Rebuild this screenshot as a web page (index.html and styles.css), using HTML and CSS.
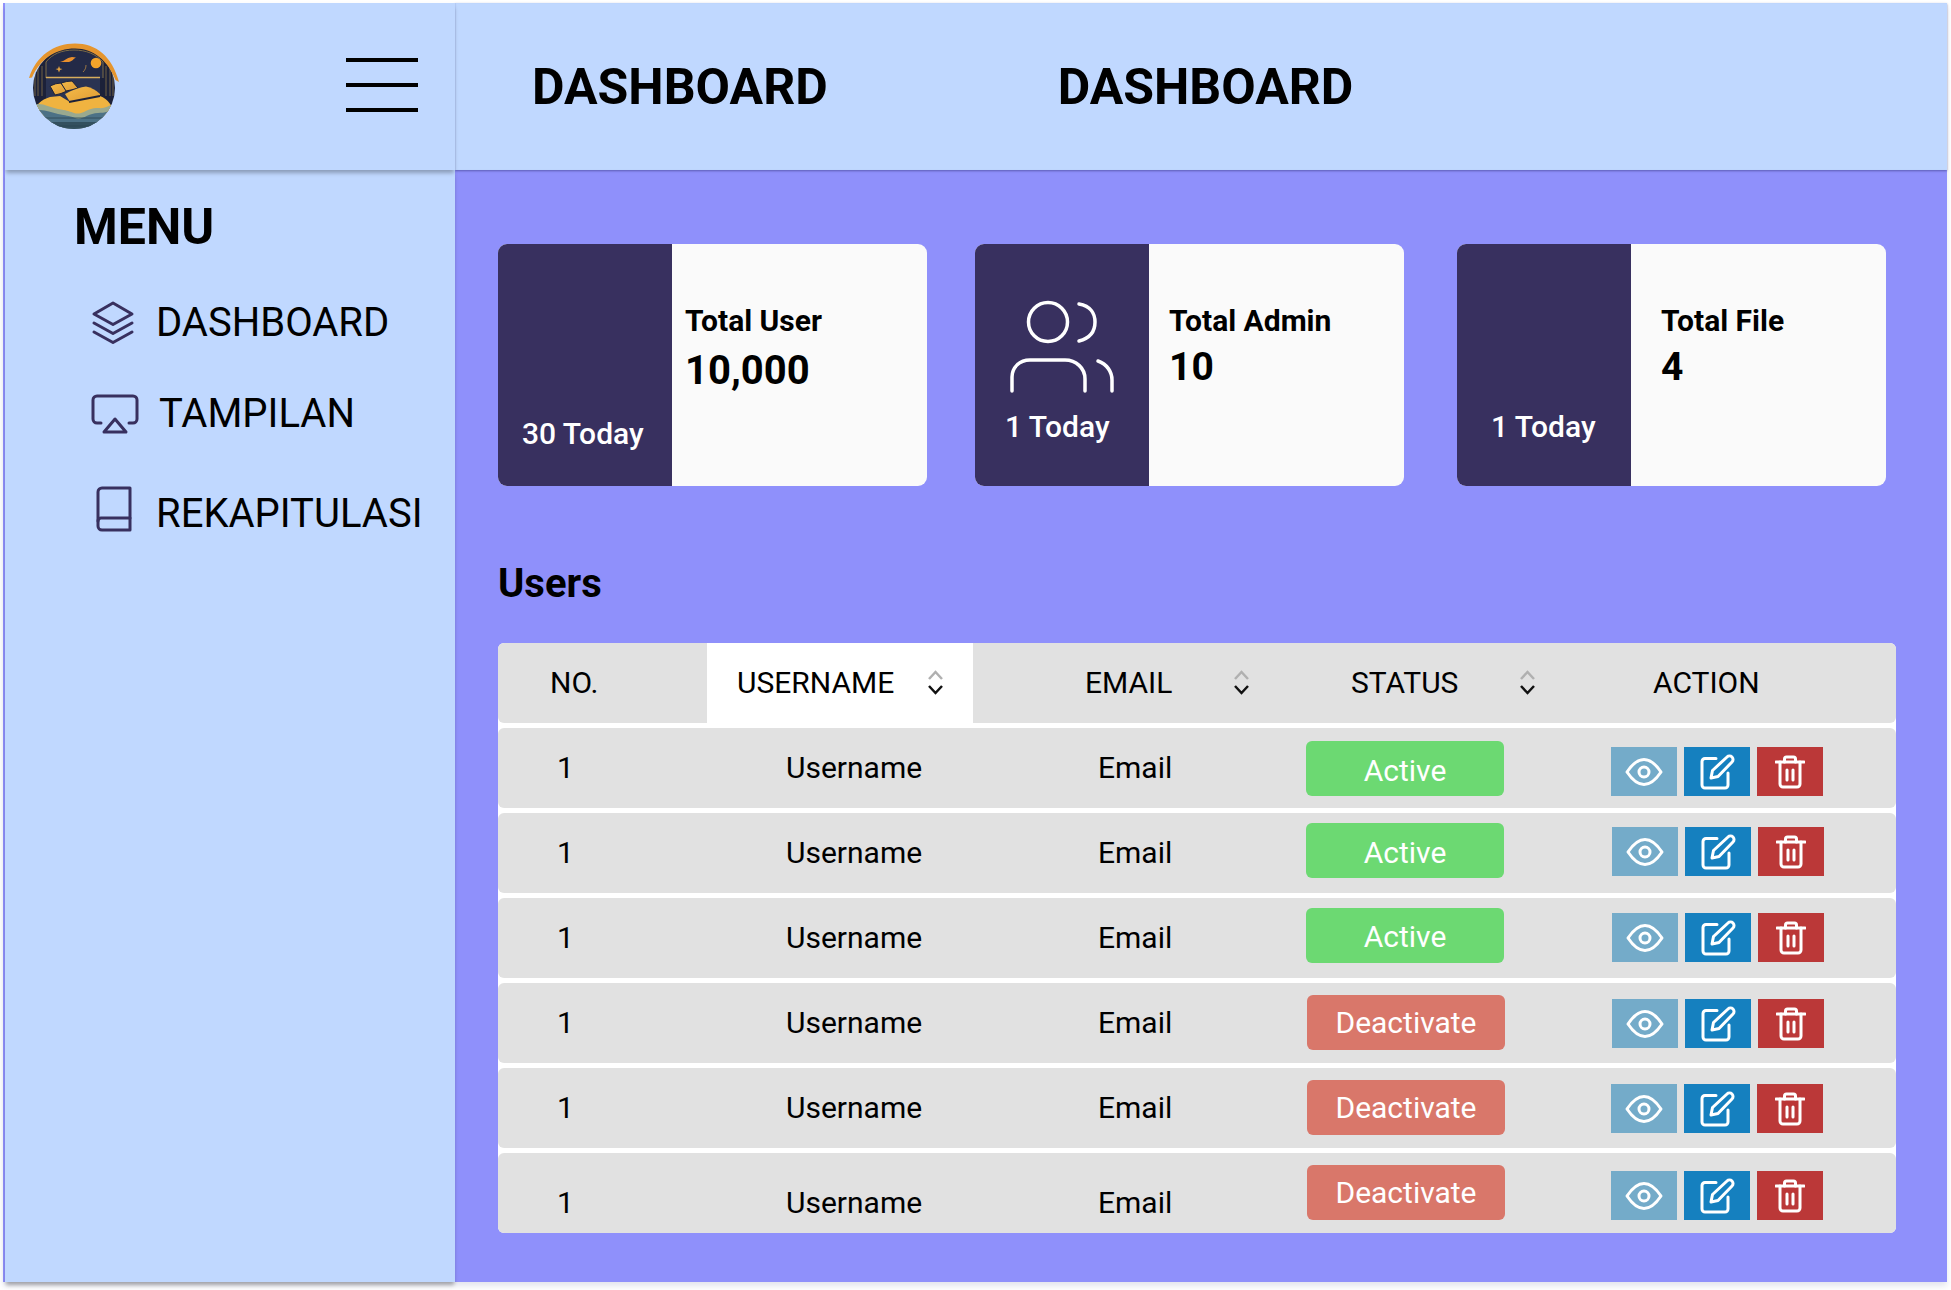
FILE: index.html
```html
<!DOCTYPE html>
<html lang="id">
<head>
<meta charset="utf-8">
<title>Dashboard</title>
<link rel="stylesheet" href="styles.css">
</head>
<body>
<div class="app">
  <header class="brand">
    <svg class="logo" viewBox="0 0 92 90" aria-label="Logo">
      <defs>
        <clipPath id="disc"><circle cx="46" cy="46" r="41"/></clipPath>
        <linearGradient id="pillow" x1="0" y1="0" x2="1" y2="1"><stop offset="0" stop-color="#f5bb48"/><stop offset="1" stop-color="#dd9a34"/></linearGradient>
      </defs>
      <g clip-path="url(#disc)">
        <rect width="92" height="90" fill="#1c2139"/>
        <path d="M18 36V20C24 12 34 8 46 8S68 12 75 20V36" fill="#232a47" stroke="#7d6c48" stroke-width="1"/>
        <path d="M7 28V54M10 26V54M14 24V54M78 24V54M82 26V54M85 28V54" stroke="#6f6144" stroke-width="1"/>
        <circle cx="68" cy="21" r="5.300" fill="#f5a52a"/>
        <path d="M32 20C37 19 38 16 44 15L48 15.500C45 17 45 19 41 20Z" fill="#e98f2c"/>
        <path d="M31 24L32 26.500 34.500 27 32 28 31 30.500 30 28 27.500 27 30 26.500Z" fill="#e0a040"/>
        <path d="M58 23C58 26 57 28 55 30" fill="none" stroke="#b98a45" stroke-width=".8"/>
        <rect x="18" y="35.500" width="54" height="24" fill="#2a3352"/>
        <path d="M18 35.500H72" stroke="#d6ad5c" stroke-width="1.500"/>
        <path d="M22 44Q28 41 33 41L39 49Q33 52 27 53Z" fill="url(#pillow)" stroke="#1c2139" stroke-width="1" stroke-linejoin="round"/>
        <path d="M33 41Q39 39 44 39L50 46Q44 48 38 49Z" fill="url(#pillow)" stroke="#1c2139" stroke-width="1" stroke-linejoin="round"/>
        <path d="M5 74C7 62 13 58 22 55L32 54 42 60 72 54C80 57 85 64 87 74Z" fill="#f0b340"/>
        <path d="M37 52Q50 45 58 44.500Q66 46 72 52V54L42 60Z" fill="url(#pillow)"/>
        <path d="M41 60L72 54" stroke="#1c2139" stroke-width="1.800"/>
        <path d="M5 63C14 60 20 65 30 67S38 68 46 71 60 65 70 66 80 62 88 63V90H5Z" fill="#9aa98f"/>
        <path d="M5 69C14 66 22 70 30 72S40 73 47 76 60 71 70 71 80 68 88 70V90H5Z" fill="#4c7186"/>
        <path d="M5 80H88V90H5Z" fill="#33505f"/>
        <path d="M12 76H82M20 84H74" stroke="#2b4452" stroke-width=".8"/>
      </g>
      <path d="M1 36C8 14 26 1.500 47 1.500S84 14 91 40L87.500 38C80 19 66 6.500 47 6.500S12 17 4 35.500Z" fill="#e5952e"/>
    </svg>
    <button class="burger" type="button" aria-label="Menu"><span></span><span></span><span></span></button>
  </header>

  <header class="topbar">
    <h1 class="title">DASHBOARD</h1>
    <h1 class="title">DASHBOARD</h1>
  </header>

  <aside class="sidebar">
    <h2 class="menu-title">MENU</h2>
    <nav class="nav">
      <a class="nav-item nav-dash">
        <svg class="nav-icon" width="44" height="44" viewBox="0 0 44 44"><path d="M22 2L41 13 22 23.500 3 13Z"/><path d="M3 22L22 32.500 41 22"/><path d="M3 31L22 41.500 41 31"/></svg>
        <span>DASHBOARD</span>
      </a>
      <a class="nav-item nav-view">
        <svg class="nav-icon" width="48" height="40" viewBox="0 0 48 40"><path d="M10 29H6a4 4 0 0 1-4-4V6a4 4 0 0 1 4-4H42a4 4 0 0 1 4 4V25a4 4 0 0 1-4 4H38"/><path d="M24 25L35 38H13Z"/></svg>
        <span>TAMPILAN</span>
      </a>
      <a class="nav-item nav-book">
        <svg class="nav-icon" width="37" height="46" viewBox="0 0 37 46"><path d="M35 2H7a4 4 0 0 0-4 4V40a4 4 0 0 0 4 4H35Z"/><path d="M3 35a3 3 0 0 1 3-3H35"/></svg>
        <span>REKAPITULASI</span>
      </a>
    </nav>
  </aside>

  <main class="main">
    <section class="cards">
      <article class="card">
        <div class="card-side side-user"><span class="today">30 Today</span></div>
        <div class="card-info info-user"><div class="card-label">Total User</div><div class="card-value value-user">10,000</div></div>
      </article>
      <article class="card">
        <div class="card-side side-admin">
          <svg class="people" width="115" height="100" viewBox="0 0 115 100"><circle cx="43" cy="24" r="19.500"/><path d="M74 6C86 8 90 16 90 24S86 40 74 43"/><path d="M7 93V79C7 70 14 62 25 62H60C71 62 80 70 80 81V93"/><path d="M93 63C102 66 107 74 107 82V93"/></svg>
          <span class="today">1 Today</span>
        </div>
        <div class="card-info info-admin"><div class="card-label">Total Admin</div><div class="card-value">10</div></div>
      </article>
      <article class="card card-file">
        <div class="card-side side-file"><span class="today">1 Today</span></div>
        <div class="card-info info-file"><div class="card-label">Total File</div><div class="card-value">4</div></div>
      </article>
    </section>

    <h2 class="users-title">Users</h2>

    <section class="table">
      <div class="thead">
        <div class="th th-no">NO.</div>
        <div class="th th-user">USERNAME<svg class="sort sort-user" width="17" height="25" viewBox="0 0 17 25"><path class="sort-up" d="M2 9L8.500 2 15 9"/><path class="sort-down" d="M2 16L8.500 23 15 16"/></svg></div>
        <div class="th th-email">EMAIL<svg class="sort sort-wide" width="17" height="25" viewBox="0 0 17 25"><path class="sort-up" d="M2 9L8.500 2 15 9"/><path class="sort-down" d="M2 16L8.500 23 15 16"/></svg></div>
        <div class="th th-status">STATUS<svg class="sort sort-wide" width="17" height="25" viewBox="0 0 17 25"><path class="sort-up" d="M2 9L8.500 2 15 9"/><path class="sort-down" d="M2 16L8.500 23 15 16"/></svg></div>
        <div class="th th-action">ACTION</div>
      </div>

      <div class="row row-1">
        <div class="td td-no">1</div><div class="td td-user">Username</div><div class="td td-email">Email</div>
        <div class="td-status"><span class="badge badge-on">Active</span></div>
        <div class="td-action">
          <button class="btn btn-view" type="button"><svg width="38" height="30" viewBox="0 0 38 30"><path d="M2 15C8 6 13 2.500 19 2.500S30 6 36 15C30 24 25 27.500 19 27.500S8 24 2 15Z"/><circle cx="19" cy="15" r="5"/></svg></button>
          <button class="btn btn-edit" type="button"><svg width="36" height="36" viewBox="0 0 36 36"><path d="M17 4.500H6a3 3 0 0 0-3 3V31a3 3 0 0 0 3 3H26a3 3 0 0 0 3-3V19"/><path d="M12 24L13.500 16.500 28 3a3 3 0 0 1 5 5L19 22.500Z"/></svg></button>
          <button class="btn btn-del" type="button"><svg width="30" height="34" viewBox="0 0 30 34"><path d="M1 7H29"/><path d="M9.500 7V4a2 2 0 0 1 2-2h7a2 2 0 0 1 2 2V7"/><path d="M5 7V29a3 3 0 0 0 3 3H22a3 3 0 0 0 3-3V7"/><path d="M12 15V25M18 15V25"/></svg></button>
        </div>
      </div>

      <div class="row row-2">
        <div class="td td-no">1</div><div class="td td-user">Username</div><div class="td td-email">Email</div>
        <div class="td-status"><span class="badge badge-on">Active</span></div>
        <div class="td-action">
          <button class="btn btn-view" type="button"><svg width="38" height="30" viewBox="0 0 38 30"><path d="M2 15C8 6 13 2.500 19 2.500S30 6 36 15C30 24 25 27.500 19 27.500S8 24 2 15Z"/><circle cx="19" cy="15" r="5"/></svg></button>
          <button class="btn btn-edit" type="button"><svg width="36" height="36" viewBox="0 0 36 36"><path d="M17 4.500H6a3 3 0 0 0-3 3V31a3 3 0 0 0 3 3H26a3 3 0 0 0 3-3V19"/><path d="M12 24L13.500 16.500 28 3a3 3 0 0 1 5 5L19 22.500Z"/></svg></button>
          <button class="btn btn-del" type="button"><svg width="30" height="34" viewBox="0 0 30 34"><path d="M1 7H29"/><path d="M9.500 7V4a2 2 0 0 1 2-2h7a2 2 0 0 1 2 2V7"/><path d="M5 7V29a3 3 0 0 0 3 3H22a3 3 0 0 0 3-3V7"/><path d="M12 15V25M18 15V25"/></svg></button>
        </div>
      </div>

      <div class="row row-3">
        <div class="td td-no">1</div><div class="td td-user">Username</div><div class="td td-email">Email</div>
        <div class="td-status"><span class="badge badge-on">Active</span></div>
        <div class="td-action">
          <button class="btn btn-view" type="button"><svg width="38" height="30" viewBox="0 0 38 30"><path d="M2 15C8 6 13 2.500 19 2.500S30 6 36 15C30 24 25 27.500 19 27.500S8 24 2 15Z"/><circle cx="19" cy="15" r="5"/></svg></button>
          <button class="btn btn-edit" type="button"><svg width="36" height="36" viewBox="0 0 36 36"><path d="M17 4.500H6a3 3 0 0 0-3 3V31a3 3 0 0 0 3 3H26a3 3 0 0 0 3-3V19"/><path d="M12 24L13.500 16.500 28 3a3 3 0 0 1 5 5L19 22.500Z"/></svg></button>
          <button class="btn btn-del" type="button"><svg width="30" height="34" viewBox="0 0 30 34"><path d="M1 7H29"/><path d="M9.500 7V4a2 2 0 0 1 2-2h7a2 2 0 0 1 2 2V7"/><path d="M5 7V29a3 3 0 0 0 3 3H22a3 3 0 0 0 3-3V7"/><path d="M12 15V25M18 15V25"/></svg></button>
        </div>
      </div>

      <div class="row row-4">
        <div class="td td-no">1</div><div class="td td-user">Username</div><div class="td td-email">Email</div>
        <div class="td-status"><span class="badge badge-off">Deactivate</span></div>
        <div class="td-action">
          <button class="btn btn-view" type="button"><svg width="38" height="30" viewBox="0 0 38 30"><path d="M2 15C8 6 13 2.500 19 2.500S30 6 36 15C30 24 25 27.500 19 27.500S8 24 2 15Z"/><circle cx="19" cy="15" r="5"/></svg></button>
          <button class="btn btn-edit" type="button"><svg width="36" height="36" viewBox="0 0 36 36"><path d="M17 4.500H6a3 3 0 0 0-3 3V31a3 3 0 0 0 3 3H26a3 3 0 0 0 3-3V19"/><path d="M12 24L13.500 16.500 28 3a3 3 0 0 1 5 5L19 22.500Z"/></svg></button>
          <button class="btn btn-del" type="button"><svg width="30" height="34" viewBox="0 0 30 34"><path d="M1 7H29"/><path d="M9.500 7V4a2 2 0 0 1 2-2h7a2 2 0 0 1 2 2V7"/><path d="M5 7V29a3 3 0 0 0 3 3H22a3 3 0 0 0 3-3V7"/><path d="M12 15V25M18 15V25"/></svg></button>
        </div>
      </div>

      <div class="row row-5">
        <div class="td td-no">1</div><div class="td td-user">Username</div><div class="td td-email">Email</div>
        <div class="td-status"><span class="badge badge-off">Deactivate</span></div>
        <div class="td-action">
          <button class="btn btn-view" type="button"><svg width="38" height="30" viewBox="0 0 38 30"><path d="M2 15C8 6 13 2.500 19 2.500S30 6 36 15C30 24 25 27.500 19 27.500S8 24 2 15Z"/><circle cx="19" cy="15" r="5"/></svg></button>
          <button class="btn btn-edit" type="button"><svg width="36" height="36" viewBox="0 0 36 36"><path d="M17 4.500H6a3 3 0 0 0-3 3V31a3 3 0 0 0 3 3H26a3 3 0 0 0 3-3V19"/><path d="M12 24L13.500 16.500 28 3a3 3 0 0 1 5 5L19 22.500Z"/></svg></button>
          <button class="btn btn-del" type="button"><svg width="30" height="34" viewBox="0 0 30 34"><path d="M1 7H29"/><path d="M9.500 7V4a2 2 0 0 1 2-2h7a2 2 0 0 1 2 2V7"/><path d="M5 7V29a3 3 0 0 0 3 3H22a3 3 0 0 0 3-3V7"/><path d="M12 15V25M18 15V25"/></svg></button>
        </div>
      </div>

      <div class="row row-6">
        <div class="td td-no">1</div><div class="td td-user">Username</div><div class="td td-email">Email</div>
        <div class="td-status"><span class="badge badge-off">Deactivate</span></div>
        <div class="td-action">
          <button class="btn btn-view" type="button"><svg width="38" height="30" viewBox="0 0 38 30"><path d="M2 15C8 6 13 2.500 19 2.500S30 6 36 15C30 24 25 27.500 19 27.500S8 24 2 15Z"/><circle cx="19" cy="15" r="5"/></svg></button>
          <button class="btn btn-edit" type="button"><svg width="36" height="36" viewBox="0 0 36 36"><path d="M17 4.500H6a3 3 0 0 0-3 3V31a3 3 0 0 0 3 3H26a3 3 0 0 0 3-3V19"/><path d="M12 24L13.500 16.500 28 3a3 3 0 0 1 5 5L19 22.500Z"/></svg></button>
          <button class="btn btn-del" type="button"><svg width="30" height="34" viewBox="0 0 30 34"><path d="M1 7H29"/><path d="M9.500 7V4a2 2 0 0 1 2-2h7a2 2 0 0 1 2 2V7"/><path d="M5 7V29a3 3 0 0 0 3 3H22a3 3 0 0 0 3-3V7"/><path d="M12 15V25M18 15V25"/></svg></button>
        </div>
      </div>
    </section>
  </main>
</div>
</body>
</html>
```

FILE: styles.css
```css
* { box-sizing: border-box; }

html, body { margin: 0; height: 100%; background: #fff; overflow: hidden; }

body { font-family: Roboto, "Liberation Sans", sans-serif; color: #000; }

.app {
  margin: 3px 0 0 3px;
  width: 1944px;
  height: 1279px;
  display: grid;
  grid-template-columns: 450px 1fr;
  grid-template-rows: 167px 1fr;
  border-left: 2px solid #8f90fb;
  box-shadow: 0 4px 6px rgba(60, 70, 130, .14);
}

/* header */
.brand {
  grid-column: 1;
  grid-row: 1;
  z-index: 2;
  display: flex;
  align-items: flex-start;
  justify-content: space-between;
  padding: 39px 37px 0 23px;
  background: #c0d8ff;
  box-shadow: 0 4px 4px -1px rgba(0, 0, 0, .28);
}

.logo { width: 92px; height: 90px; }

.burger {
  display: flex;
  flex-direction: column;
  gap: 21px;
  width: 72px;
  margin-top: 16px;
  padding: 0;
  border: 0;
  background: none;
}
.burger span { display: block; height: 4px; background: #000; }

.topbar {
  grid-column: 2;
  grid-row: 1;
  z-index: 1;
  display: flex;
  gap: 230px;
  padding: 49px 0 0 77px;
  background: #c0d8ff;
  box-shadow: 0 1px 2px rgba(40, 40, 110, .5), inset 1px 0 1px rgba(40, 40, 110, .08);
}

.title { margin: 0; font-size: 50px; line-height: 70px; font-weight: 700; }

/* sidebar */
.sidebar {
  grid-column: 1;
  grid-row: 2;
  background: #c0d8ff;
  box-shadow: 0 4px 4px -1px rgba(0, 0, 0, .3);
  z-index: 1;
  padding: 29px 0 0 69px;
}

.menu-title { margin: 0; font-size: 50px; line-height: 56px; font-weight: 700; }

.nav { display: flex; flex-direction: column; margin-top: 38px; }

.nav-item { display: flex; align-items: center; height: 60px; font-size: 40px; line-height: 46px; color: #000; }

.nav-icon { flex: none; fill: none; stroke: #38305f; stroke-width: 3; stroke-linejoin: round; stroke-linecap: round; }

.nav-dash { padding-left: 17px; gap: 21px; }
.nav-view { padding-left: 17px; gap: 20px; margin-top: 31px; }
.nav-book { padding-left: 21px; gap: 24px; margin-top: 40px; }
.nav-book .nav-icon { margin-top: -10px; }

/* main */
.main { grid-column: 2; grid-row: 2; background: #8f90fb; padding: 74px 0 0 43px; }

.cards { display: flex; gap: 48px; }

.card { display: flex; width: 429px; height: 242px; border-radius: 9px; background: #fafafa; overflow: hidden; }
.card-file { margin-left: 5px; }

.card-side {
  flex: none;
  width: 174px;
  display: flex;
  flex-direction: column;
  justify-content: flex-end;
  background: #38305f;
  color: #fff;
}
.side-user { padding: 0 0 34px 24px; }
.side-admin { padding: 0 0 41px 30px; }
.side-file { padding: 0 0 41px 34px; }

.people { margin-bottom: 11px; fill: none; stroke: #fff; stroke-width: 3.500; stroke-linecap: round; }

.today { font-size: 30px; line-height: 36px; font-weight: 500; }

.card-info { padding-top: 59px; }
.info-user { padding-left: 13px; }
.info-admin { padding-left: 20px; }
.info-file { padding-left: 30px; }

.card-label { font-size: 30px; line-height: 36px; font-weight: 700; }
.card-value { margin-top: 5px; font-size: 39px; line-height: 46px; font-weight: 700; }
.value-user { margin-top: 9px; font-size: 40px; }

.users-title { margin: 0; padding-top: 75px; font-size: 40px; line-height: 45px; font-weight: 700; }

/* table */
.table { width: 1398px; margin-top: 37px; display: flex; flex-direction: column; gap: 5px; background: #fff; border-radius: 6px; }

.thead, .row {
  display: grid;
  grid-template-columns: 209px 266px 317px 290px 316px;
  height: 80px;
  background: #e1e1e1;
  border-radius: 6px;
  font-size: 30px;
  line-height: 36px;
}

.th { display: flex; align-items: center; padding-bottom: 1px; }
.th-no { padding-left: 52px; }
.th-user { padding-left: 30px; background: #fff; }
.th-email { padding-left: 112px; }
.th-status { padding-left: 61px; }
.th-action { padding-left: 73px; }

.sort { flex: none; fill: none; stroke-width: 2.500; }
.sort-user { margin-left: 33px; }
.sort-wide { margin-left: 61px; }
.sort-up { stroke: #b0b0b0; }
.sort-down { stroke: #111; }

.row { --text-top: 22px; --badge-top: 12px; --badge-text: 1px; --action-top: 16px; --action-left: 32px; }
.row-1 { --badge-top: 13px; --badge-text: 5px; --action-top: 19px; --action-left: 31px; }
.row-2 { --badge-top: 10px; --badge-text: 4px; --action-top: 14px; }
.row-3 { --badge-top: 10px; --badge-text: 2px; --action-top: 15px; }
.row-5 { --action-left: 31px; }
.row-6 { --text-top: 32px; --action-top: 18px; --action-left: 31px; }

.td { padding-top: var(--text-top); }
.td-no { padding-left: 59px; }
.td-user { padding-left: 79px; }
.td-email { padding-left: 125px; }

.td-status { padding: var(--badge-top) 0 0 16px; }

.badge {
  display: flex;
  align-items: center;
  justify-content: center;
  width: 198px;
  height: 55px;
  padding-top: var(--badge-text);
  border-radius: 6px;
  color: #fff;
}
.badge-on { background: #6cd972; }
.badge-off { background: #d9776a; margin-left: 1px; }

.td-action { display: flex; align-items: flex-start; gap: 7px; padding: var(--action-top) 0 0 var(--action-left); }

.btn {
  display: flex;
  align-items: center;
  justify-content: center;
  width: 66px;
  height: 49px;
  padding: 0;
  border: 0;
  color: #fff;
}
.btn svg { fill: none; stroke: #fff; stroke-width: 3; stroke-linecap: round; stroke-linejoin: round; }
.btn-view { background: #74abc9; }
.btn-edit { background: #1580bf; }
.btn-del { background: #bb3838; }
```
